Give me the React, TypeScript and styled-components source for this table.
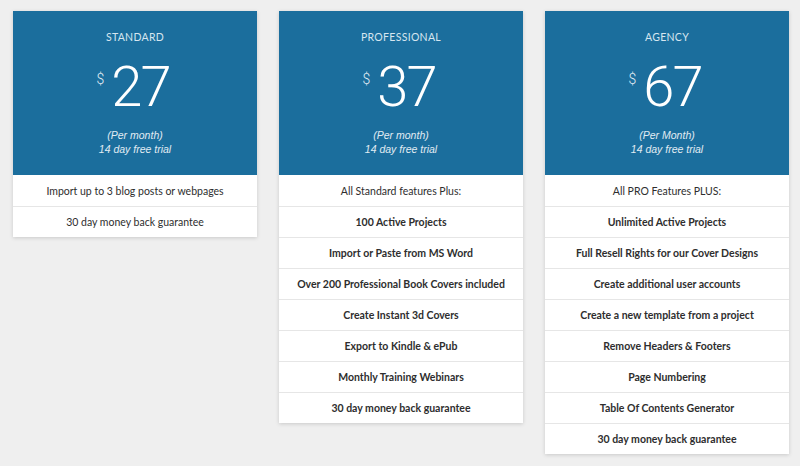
import React from "react";
import styled, { createGlobalStyle } from "styled-components";

const Global = createGlobalStyle`
  html, body { margin: 0; padding: 0; background: #efefef; }
  body { font-family: Lato, "Open Sans", sans-serif; -webkit-font-smoothing: antialiased; }
`;

const Page = styled.div`
  display: flex;
  align-items: flex-start;
  gap: 22px;
  padding: 11px 12px 0 13px;
  height: 466px;
  box-sizing: border-box;
`;

const Card = styled.div`
  width: 244px;
  flex: 0 0 244px;
  background: #fff;
  box-shadow: 0 1px 4px rgba(0, 0, 0, 0.16);
`;

const Header = styled.div`
  height: 164px;
  box-sizing: border-box;
  background: #1b6e9d;
  color: #fff;
  display: flex;
  flex-direction: column;
  align-items: center;
  padding-top: 19px;
`;

const Title = styled.div`
  font-family: Lato, sans-serif;
  font-size: 10.5px;
  line-height: 14px;
  letter-spacing: 0.3px;
  color: #d6e6f0;
`;

const Price = styled.div`
  display: flex;
  align-items: flex-start;
  margin-top: 15px;
  margin-left: -4px;
`;

const Dollar = styled.span`
  font-family: Roboto, sans-serif;
  font-weight: 300;
  font-size: 14px;
  line-height: 16px;
  margin-top: 12px;
  margin-right: 7px;
  color: #e4eef5;
`;

const Amount = styled.span`
  font-family: Roboto, sans-serif;
  font-weight: 300;
  font-size: 56px;
  line-height: 56px;
  letter-spacing: -2px;
`;

const Note = styled.div`
  margin-top: 13px;
  font-family: "Liberation Sans", Arial, sans-serif;
  font-style: italic;
  font-size: 10.5px;
  line-height: 14px;
  text-align: center;
  color: #e1ecf3;
`;

const Row = styled.div<{ $bold?: boolean }>`
  height: 31px;
  box-sizing: border-box;
  display: flex;
  align-items: center;
  justify-content: center;
  font-family: Lato, sans-serif;
  font-size: 10.5px;
  font-weight: ${(p) => (p.$bold ? 700 : 400)};
  color: #2e2e2e;
  & + & { border-top: 1px solid #e6e6e6; }
`;

type Plan = {
  name: string;
  price: string;
  per: string;
  lead: string;
  items: string[];
  boldItems: boolean;
};

const plans: Plan[] = [
  {
    name: "STANDARD",
    price: "27",
    per: "(Per month)",
    lead: "Import up to 3 blog posts or webpages",
    items: ["30 day money back guarantee"],
    boldItems: false,
  },
  {
    name: "PROFESSIONAL",
    price: "37",
    per: "(Per month)",
    lead: "All Standard features Plus:",
    items: [
      "100 Active Projects",
      "Import or Paste from MS Word",
      "Over 200 Professional Book Covers included",
      "Create Instant 3d Covers",
      "Export to Kindle & ePub",
      "Monthly Training Webinars",
      "30 day money back guarantee",
    ],
    boldItems: true,
  },
  {
    name: "AGENCY",
    price: "67",
    per: "(Per Month)",
    lead: "All PRO Features PLUS:",
    items: [
      "Unlimited Active Projects",
      "Full Resell Rights for our Cover Designs",
      "Create additional user accounts",
      "Create a new template from a project",
      "Remove Headers & Footers",
      "Page Numbering",
      "Table Of Contents Generator",
      "30 day money back guarantee",
    ],
    boldItems: true,
  },
];

export default function App() {
  return (
    <>
      <Global />
      <Page>
        {plans.map((p) => (
          <Card key={p.name}>
            <Header>
              <Title>{p.name}</Title>
              <Price>
                <Dollar>$</Dollar>
                <Amount>{p.price}</Amount>
              </Price>
              <Note>
                {p.per}
                <br />
                14 day free trial
              </Note>
            </Header>
            <Row>{p.lead}</Row>
            {p.items.map((it) => (
              <Row key={it} $bold={p.boldItems}>
                {it}
              </Row>
            ))}
          </Card>
        ))}
      </Page>
    </>
  );
}
